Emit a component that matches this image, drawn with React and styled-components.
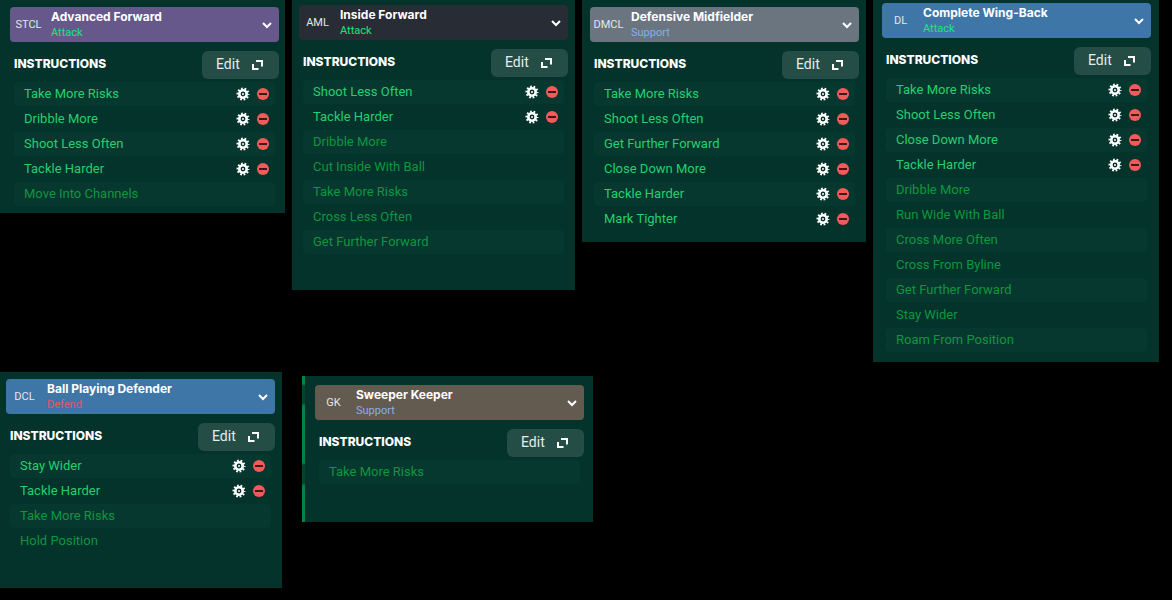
import {useState} from "react";
import styled, {createGlobalStyle} from "styled-components";

const GlobalStyle = createGlobalStyle`
  body {
    margin: 0;
    background: #000;
    font-family: Roboto, "Liberation Sans", sans-serif;
  }
`;

const Board = styled.main`
  display: flex;
  flex-direction: column;
  gap: 10px;
`;

const PanelRow = styled.div`
  display: grid;
  grid-template-columns: ${(props) => props.$columns};
  gap: ${(props) => props.$gap};
  padding-right: ${(props) => props.$end || "0px"};
  align-items: start;
`;

const Panel = styled.section`
  box-sizing: border-box;
  min-width: 0;
  padding: ${(props) => props.$padding};
  margin-top: ${(props) => (props.$pitch ? "4px" : "0px")};
  background: ${(props) =>
    props.$pitch
        ? "linear-gradient(#078046 8px, #03442f 10px 27px, #078046 30px 87px, #03442f 89px 107px, #078046 110px) left / 3px 100% no-repeat #03332b"
        : "#03332b"};
`;

const RoleBar = styled.div`
  display: flex;
  align-items: center;
  height: 35px;
  padding-right: 7px;
  border-radius: 4px;
  background: ${(props) => props.$color};
`;

const Position = styled.label`
  width: 37px;
  margin-right: 4px;
  color: #e4e6ea;
  font-size: 11px;
  text-align: center;
`;

const RoleText = styled.div`
  flex: 1;
  display: flex;
  flex-direction: column;
  min-width: 0;
`;

const RoleSelect = styled.select`
  appearance: none;
  margin: 0;
  padding: 0;
  border: none;
  background: transparent;
  color: #fff;
  font: 700 12px/16px Inter, "Liberation Sans", sans-serif;
  cursor: pointer;

  option {
    color: #000;
  }
`;

const Duty = styled.span`
  color: ${(props) => props.$color};
  font-size: 11px;
  line-height: 15px;
`;

const Heading = styled.div`
  display: flex;
  align-items: center;
  justify-content: space-between;
  margin-top: 9px;
  padding-left: 4px;
`;

const Title = styled.h2`
  margin: 0 0 2px;
  color: #fff;
  font: 800 12px/16px Inter, "Liberation Sans", sans-serif;
`;

const EditButton = styled.button`
  display: flex;
  align-items: center;
  justify-content: space-between;
  width: 77px;
  height: 28px;
  padding: 0 16px 0 14px;
  border: none;
  border-radius: 6px;
  background: #244d45;
  color: #e6ece9;
  font: 400 14px/24px Roboto, sans-serif;
  cursor: pointer;
`;

const EditLabel = styled.span`
  padding-bottom: 2px;
`;

const List = styled.ul`
  display: grid;
  gap: 1px;
  margin: 3px 4px 0;
  padding: 0;
  list-style: none;
`;

const Item = styled.li`
  display: flex;
  align-items: center;
  gap: 7px;
  height: 24px;
  padding: 0 6px 0 10px;
  border-radius: 4px;
  color: ${(props) => (props.$locked ? "#0f963e" : "#25cf70")};
  font-size: 13px;

  &:nth-child(odd) {
    background: #07382f;
  }
`;

const ItemName = styled.span`
  flex: 1;
  line-height: 24px;
`;

const IconButton = styled.button`
  display: flex;
  padding: 0;
  border: none;
  background: none;
  cursor: pointer;
`;

const Chevron = () => (
    <svg width="10" height="8" viewBox="0 0 10 8" fill="none" aria-hidden="true">
        <path d="M1 2l4 4 4-4" stroke="#fff" strokeWidth="2"/>
    </svg>
);

const Expand = () => (
    <svg width="11" height="10" viewBox="0 0 11 10" fill="none" aria-hidden="true">
        <path d="M4 1h6v5.5M1 4v5h5.5" stroke="#fff" strokeWidth="2"/>
    </svg>
);

const Gear = () => (
    <svg width="14" height="14" viewBox="0 0 14 14" fill="none" aria-hidden="true">
        <circle cx="7" cy="7" r="5.4" stroke="#fff" strokeWidth="2.2" strokeDasharray="1.7 1.693" strokeDashoffset="0.85"/>
        <circle cx="7" cy="7" r="3.7" stroke="#fff" strokeWidth="2.6"/>
        <circle cx="7" cy="7" r="1" fill="#fff"/>
    </svg>
);

const Minus = () => (
    <svg width="12" height="12" viewBox="0 0 12 12" aria-hidden="true">
        <circle cx="6" cy="6" r="6" fill="#f55a5a"/>
        <path d="M2 5h8v2H2z" fill="#3d1a1a"/>
    </svg>
);

const duties = {
    Attack: "#1fe47c",
    Support: "#82b1e8",
    Defend: "#e05569"
};

const top = [
    {
        position: "STCL", role: "Advanced Forward", duty: "Attack", color: "#66588a", padding: "7px 6px 7px 10px",
        active: ["Take More Risks", "Dribble More", "Shoot Less Often", "Tackle Harder"],
        locked: ["Move Into Channels"]
    },
    {
        position: "AML", role: "Inside Forward", duty: "Attack", color: "#282c35", padding: "5px 7px 36px",
        active: ["Shoot Less Often", "Tackle Harder"],
        locked: ["Dribble More", "Cut Inside With Ball", "Take More Risks", "Cross Less Often", "Get Further Forward"]
    },
    {
        position: "DMCL", role: "Defensive Midfielder", duty: "Support", color: "#6b7580", padding: "7px 7px 11px 8px",
        active: ["Take More Risks", "Shoot Less Often", "Get Further Forward", "Close Down More", "Tackle Harder", "Mark Tighter"],
        locked: []
    },
    {
        position: "DL", role: "Complete Wing-Back", duty: "Attack", color: "#3e76a8", padding: "3px 8px 10px 9px",
        active: ["Take More Risks", "Shoot Less Often", "Close Down More", "Tackle Harder"],
        locked: ["Dribble More", "Run Wide With Ball", "Cross More Often", "Cross From Byline", "Get Further Forward", "Stay Wider", "Roam From Position"]
    }
];

const bottom = [
    {
        position: "DCL", role: "Ball Playing Defender", duty: "Defend", color: "#3e76a8", padding: "7px 7px 35px 6px",
        active: ["Stay Wider", "Tackle Harder"],
        locked: ["Take More Risks", "Hold Position"]
    },
    {
        position: "GK", role: "Sweeper Keeper", duty: "Support", color: "#645b50", padding: "9px 9px 38px 13px", pitch: true,
        active: [],
        locked: ["Take More Risks"]
    }
];

const PlayerPanel = ({player}) => {
    const [active, setActive] = useState(player.active);
    const id = "role-" + player.position;

    const handleRemove = (name) => {
        setActive(active.filter((item) => item !== name));
    };

    return (
        <Panel $padding={player.padding} $pitch={player.pitch}>
            <RoleBar $color={player.color}>
                <Position htmlFor={id}>{player.position}</Position>
                <RoleText>
                    <RoleSelect id={id}>
                        <option>{player.role}</option>
                    </RoleSelect>
                    <Duty $color={duties[player.duty]}>{player.duty}</Duty>
                </RoleText>
                <Chevron/>
            </RoleBar>
            <Heading>
                <Title>INSTRUCTIONS</Title>
                <EditButton><EditLabel>Edit</EditLabel><Expand/></EditButton>
            </Heading>
            <List>
                {active.map((name) => (
                    <Item key={name}>
                        <ItemName>{name}</ItemName>
                        <IconButton aria-label={"Configure " + name}><Gear/></IconButton>
                        <IconButton aria-label={"Remove " + name} onClick={() => handleRemove(name)}><Minus/></IconButton>
                    </Item>
                ))}
                {player.locked.map((name) => (
                    <Item key={name} $locked>
                        <ItemName>{name}</ItemName>
                    </Item>
                ))}
            </List>
        </Panel>
    );
};

const App = () => {
    return (
        <Board>
            <GlobalStyle/>
            <PanelRow $columns="285fr 283fr 284fr 286fr" $gap="7px" $end="13px">
                {top.map((player) => <PlayerPanel key={player.position} player={player}/>)}
            </PanelRow>
            <PanelRow $columns="282fr 291fr 559fr" $gap="20px">
                {bottom.map((player) => <PlayerPanel key={player.position} player={player}/>)}
            </PanelRow>
        </Board>
    );
};

export default App;
